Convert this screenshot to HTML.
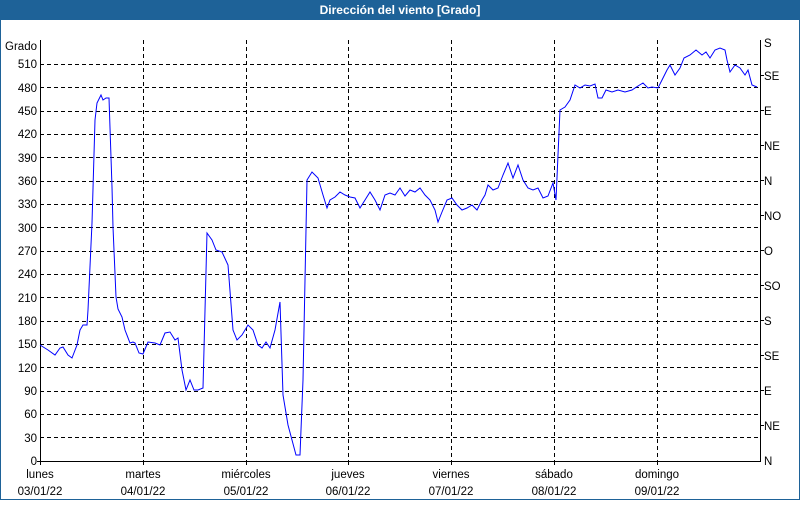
<!DOCTYPE html><html><head><style>
body{margin:0;width:800px;height:500px;overflow:hidden;background:#fff}
svg text{font-family:"Liberation Sans",sans-serif;font-size:11.5px;fill:#000}
</style></head><body>
<svg width="800" height="500" viewBox="0 0 800 500" xmlns="http://www.w3.org/2000/svg">
<rect x="0.5" y="0.5" width="799" height="499" fill="#fff" stroke="#1e6298"/>
<rect x="0" y="0" width="800" height="20" fill="#1e6298"/>
<text x="400" y="14" text-anchor="middle" style="fill:#fff;font-weight:bold;font-size:12px">Dirección del viento [Grado]</text>
<g stroke="#000" stroke-dasharray="4,3" stroke-width="1">
<path d="M40 64.5H760M40 87.5H760M40 111.5H760M40 134.5H760M40 157.5H760M40 181.5H760M40 204.5H760M40 227.5H760M40 251.5H760M40 274.5H760M40 297.5H760M40 321.5H760M40 344.5H760M40 367.5H760M40 391.5H760M40 414.5H760M40 437.5H760"/>
<path d="M143.5 40V461M246.5 40V461M348.5 40V461M451.5 40V461M554.5 40V461M657.5 40V461"/>
</g>
<path d="M40.5 40V461.5H760.5V40" fill="none" stroke="#000"/>
<g stroke="#000"><path d="M37 461.5h4M760 75.5h4M760 110.5h4M760 145.5h4M760 180.5h4M760 215.5h4M760 250.5h4M760 285.5h4M760 320.5h4M760 355.5h4M760 390.5h4M760 425.5h4M40.5 461v4M143.5 461v4M246.5 461v4M348.5 461v4M451.5 461v4M554.5 461v4M657.5 461v4"/></g>
<g text-anchor="end">
<text x="37" y="50">Grado</text>
<text x="37" y="68">510</text><text x="37" y="92">480</text><text x="37" y="115">450</text><text x="37" y="138">420</text><text x="37" y="162">390</text><text x="37" y="185">360</text><text x="37" y="208">330</text><text x="37" y="232">300</text><text x="37" y="255">270</text><text x="37" y="278">240</text><text x="37" y="302">210</text><text x="37" y="325">180</text><text x="37" y="348">150</text><text x="37" y="372">120</text><text x="37" y="395">90</text><text x="37" y="418">60</text><text x="37" y="442">30</text><text x="37" y="465">0</text>
</g>
<g>
<text x="764" y="47">S</text><text x="764" y="80">SE</text><text x="764" y="115">E</text><text x="764" y="150">NE</text><text x="764" y="185">N</text><text x="764" y="220">NO</text><text x="764" y="255">O</text><text x="764" y="290">SO</text><text x="764" y="325">S</text><text x="764" y="360">SE</text><text x="764" y="395">E</text><text x="764" y="430">NE</text><text x="764" y="465">N</text>
</g>
<g text-anchor="middle">
<text x="40" y="478">lunes</text><text x="40" y="495">03/01/22</text>
<text x="143" y="478">martes</text><text x="143" y="495">04/01/22</text>
<text x="246" y="478">miércoles</text><text x="246" y="495">05/01/22</text>
<text x="348" y="478">jueves</text><text x="348" y="495">06/01/22</text>
<text x="451" y="478">viernes</text><text x="451" y="495">07/01/22</text>
<text x="554" y="478">sábado</text><text x="554" y="495">08/01/22</text>
<text x="657" y="478">domingo</text><text x="657" y="495">09/01/22</text>
</g>
<polyline fill="none" stroke="#0000ff" stroke-width="1" points="40,345 48,350 55,355 60,348 63,347 68,355 72,358 77,345 80,330 83,325 87,325 88,310 92,223 95,120 97,103 101,95 103,100 106,98 109,98 112,187 113,227 116,297 118,309 122,317 125,330 130,343 133,342 135,343 139,353 143,354 148,342 155,343 160,345 165,333 170,332 175,340 178,338 182,370 186,390 190,380 194,390 198,390 203,388 207,233 212,240 216,250 222,252 228,265 233,330 237,340 242,335 248,325 253,330 258,345 262,348 266,342 270,348 275,330 280,302 283,395 288,425 292,440 296,455 300,455 303,380 307,180 312,172 318,178 323,195 327,208 330,200 335,197 340,192 345,195 350,197 355,198 360,208 365,200 370,192 375,200 380,210 385,195 390,193 395,195 400,188 405,196 410,190 415,192 420,188 425,195 430,200 435,210 438,222 442,212 447,200 452,198 457,205 462,210 467,208 472,205 477,210 482,200 485,195 488,185 493,190 498,188 503,175 508,163 513,178 518,165 523,180 528,188 533,190 538,188 543,198 548,196 553,183 556,200 560,110 565,107 570,100 575,85 580,88 585,85 590,86 595,84 598,98 602,98 606,90 612,92 618,90 625,92 632,90 638,86 643,83 648,88 652,87 658,88 662,80 667,70 670,65 675,75 680,68 684,58 690,55 696,50 702,55 706,52 710,58 715,50 720,48 725,50 727,60 730,72 735,65 740,68 745,75 748,70 752,85 757,87"/>
</svg>
</body></html>
